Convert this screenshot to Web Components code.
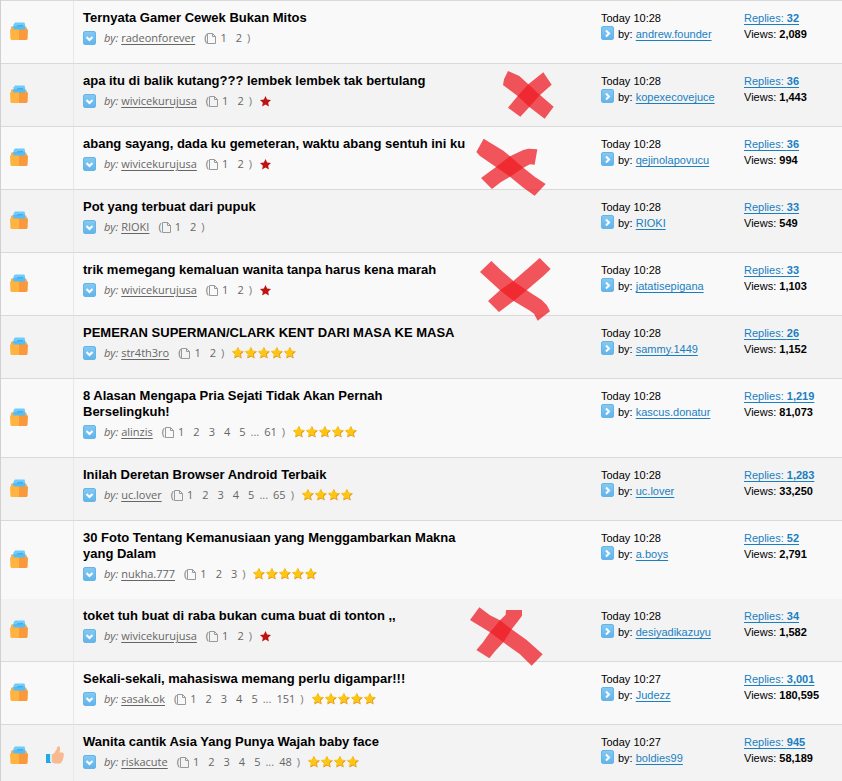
<!DOCTYPE html>
<html lang="id">
<head>
<meta charset="utf-8">
<meta name="viewport" content="width=device-width, initial-scale=1">
<title>Forum</title>
<style>
  body {
    margin: 0;
    background: #f9f9f9;
    color: #000;
    font-family: "Liberation Sans", Arial, sans-serif;
    font-size: 11px;
    line-height: 16px;
  }
</style>
</head>
<body>
<thread-list></thread-list>

<script>
const threads = [
  { title: "Ternyata Gamer Cewek Bukan Mitos", author: "radeonforever", pages: ["1", "2"], time: "Today 10:28", last: "andrew.founder", replies: "32", views: "2,089" },
  { title: "apa itu di balik kutang??? lembek lembek tak bertulang", author: "wivicekurujusa", pages: ["1", "2"], red: true, mark: "a", time: "Today 10:28", last: "kopexecovejuce", replies: "36", views: "1,443" },
  { title: "abang sayang, dada ku gemeteran, waktu abang sentuh ini ku", author: "wivicekurujusa", pages: ["1", "2"], red: true, mark: "b", time: "Today 10:28", last: "qejinolapovucu", replies: "36", views: "994" },
  { title: "Pot yang terbuat dari pupuk", author: "RIOKI", pages: ["1", "2"], time: "Today 10:28", last: "RIOKI", replies: "33", views: "549" },
  { title: "trik memegang kemaluan wanita tanpa harus kena marah", author: "wivicekurujusa", pages: ["1", "2"], red: true, mark: "c", time: "Today 10:28", last: "jatatisepigana", replies: "33", views: "1,103" },
  { title: "PEMERAN SUPERMAN/CLARK KENT DARI MASA KE MASA", author: "str4th3ro", pages: ["1", "2"], stars: 5, time: "Today 10:28", last: "sammy.1449", replies: "26", views: "1,152" },
  { title: "8 Alasan Mengapa Pria Sejati Tidak Akan Pernah Berselingkuh!", author: "alinzis", pages: ["1", "2", "3", "4", "5"], lastPage: "61", stars: 5, time: "Today 10:28", last: "kascus.donatur", replies: "1,219", views: "81,073" },
  { title: "Inilah Deretan Browser Android Terbaik", author: "uc.lover", pages: ["1", "2", "3", "4", "5"], lastPage: "65", stars: 4, time: "Today 10:28", last: "uc.lover", replies: "1,283", views: "33,250" },
  { title: "30 Foto Tentang Kemanusiaan yang Menggambarkan Makna yang Dalam", author: "nukha.777", pages: ["1", "2", "3"], stars: 5, time: "Today 10:28", last: "a.boys", replies: "52", views: "2,791" },
  { title: "toket tuh buat di raba bukan cuma buat di tonton ,,", author: "wivicekurujusa", pages: ["1", "2"], red: true, mark: "d", joined: true, time: "Today 10:28", last: "desiyadikazuyu", replies: "34", views: "1,582" },
  { title: "Sekali-sekali, mahasiswa memang perlu digampar!!!", author: "sasak.ok", pages: ["1", "2", "3", "4", "5"], lastPage: "151", stars: 5, time: "Today 10:27", last: "Judezz", replies: "3,001", views: "180,595" },
  { title: "Wanita cantik Asia Yang Punya Wajah baby face", author: "riskacute", pages: ["1", "2", "3", "4", "5"], lastPage: "48", stars: 4, liked: true, time: "Today 10:27", last: "boldies99", replies: "945", views: "58,189" },
];

const icons = {
  folder: `<svg width="18" height="18" viewBox="0 0 18 18">
      <path d="M1 5l2-1h12l2 2v4H1z" fill="#f8ae4a"/>
      <path d="M5 .5h9.500l.5 2 .8 6H3.500V2.500z" fill="#6fcbf9"/>
      <path d="M3.500 4h11.500v4H3.500z" fill="#52bdf8"/>
      <path d="M7 3.500l6-.5v1l-6 .5z" fill="#3ba4e6"/>
      <path d="M0 7.500h9V18H2q-1.500 0-1.600-1.500z" fill="#ffb340"/>
      <path d="M9 7.500h9l-.4 9Q17.500 18 16 18H9z" fill="#fa993b"/>
    </svg>`,
  thumb: `<svg width="18" height="18" viewBox="0 0 18 18">
      <path d="M0 8h5v9H0z" fill="#25a9e0"/>
      <path d="M4 8h2v8H4z" fill="#cfeefa"/>
      <path d="M6 8.500q3-1.500 4.500-5L11.300.8q1.700-1.300 2.700.7.5 2-.7 5h3.200q1.700.7 1.300 2.500 0 2-.7 3-.2 2-.9 3-.8 2.500-3 2.500H9l-3-1z" fill="#f8b990"/>
    </svg>`,
};

class ForumIcon extends HTMLElement {
  connectedCallback() {
    this.attachShadow({ mode: "open" });
    this.shadowRoot.innerHTML = `
      <style>
        :host { display: inline-block; width: 18px; height: 18px; }
        svg { display: block; }
      </style>
      ${icons[this.getAttribute("name")]}
    `;
  }
}
customElements.define("forum-icon", ForumIcon);

// small blue square button with a chevron, pointing down or right
class ChevronButton extends HTMLElement {
  connectedCallback() {
    const down = this.getAttribute("direction") === "down";
    this.attachShadow({ mode: "open" });
    this.shadowRoot.innerHTML = `
      <style>
        :host { display: block; }
        button {
          display: flex;
          align-items: center;
          justify-content: center;
          width: 13px;
          height: 14px;
          padding: 0;
          border: 1px solid #66b5e9;
          border-radius: 2px;
          background: linear-gradient(#83c9f2, #62b4ec);
          cursor: pointer;
        }
        svg { display: block; }
      </style>
      <button type="button" aria-label="${down ? "Preview" : "Go to last post"}">
        <svg width="11" height="11" viewBox="0 0 11 11" fill="none" stroke="#fff" stroke-width="2">
          <path d="${down ? "M2.5 4l3 3 3-3" : "M4 2.5l3 3-3 3"}"/>
        </svg>
      </button>
    `;
  }
}
customElements.define("chevron-button", ChevronButton);

class StarRating extends HTMLElement {
  connectedCallback() {
    const red = this.hasAttribute("red");
    const count = Number(this.getAttribute("count"));
    const size = red ? 11 : 12;
    const shape = "M6 0l1.8 3.9 4.2.5-3.1 2.9.8 4.2L6 9.4l-3.7 2.1.8-4.2L0 4.4l4.2-.5z";
    const star = `
      <svg width="${size}" height="${size}" viewBox="0 0 12 12">
        ${red ? `<path d="${shape}" fill="#be1313"/>` : `<path d="${shape}" fill="#e08a1c"/><path d="${shape}" transform="scale(.92)" fill="#fdc613"/>`}
      </svg>`;
    this.attachShadow({ mode: "open" });
    this.shadowRoot.innerHTML = `
      <style>
        :host { display: flex; gap: 1px; }
        svg { display: block; }
      </style>
      ${star.repeat(count)}
    `;
  }
}
customElements.define("star-rating", StarRating);

class PageLinks extends HTMLElement {
  setPages(pages, lastPage) {
    this.attachShadow({ mode: "open" });
    this.shadowRoot.innerHTML = `
      <style>
        :host { display: flex; align-items: center; color: #777; }
        svg { display: block; margin-right: 4px; }
        .pages { display: flex; gap: 9px; margin-right: 5px; }
        .last { display: flex; gap: 5px; margin-right: 5px; }
        a { color: #666; text-decoration: none; }
      </style>
      <span>(</span>
      <svg width="9" height="11" viewBox="0 0 9 11" fill="none" stroke="#999">
        <path d="M.5.5h5l3 3v7h-8zM5.5.5v3h3"/>
      </svg>
      <span class="pages">${pages.map((page) => `<a href="#">${page}</a>`).join("")}</span>
      ${lastPage ? `<span class="last"><span>...</span><a href="#">${lastPage}</a></span>` : ""}
      <span>)</span>
    `;
  }
}
customElements.define("page-links", PageLinks);

// hand-painted red cross laid over a thread
class CrossMark extends HTMLElement {
  connectedCallback() {
    const marks = {
      a: {
        origin: "-60 0",
        strokes: [
          "84,33 118,48 145,73 180,105 221,140 194,176 148,141 113,108 69,75 72,58",
          "190,37 215,74 180,105 148,141 121,170 84,143 113,108 145,73",
        ],
      },
      b: {
        origin: "0 9",
        strokes: [
          "71,56 130,92 150,109 190,143 225,171 257,192 224,227 190,203 150,170 108,141 60,108 49,96",
          "232,88 224,134 210,133 190,143 150,170 122,187 96,207 63,174 108,141 150,109 190,90 205,86",
        ],
      },
      c: {
        origin: "-30 -3",
        strokes: [
          "64,33 98,65 130,93 170,121 215,150 230,165 240,184 203,212 192,191 180,182 131,153 90,121 30,66",
          "209,24 242,57 220,78 170,121 131,153 87,186 54,153 90,121 130,93 175,54",
        ],
      },
      d: {
        origin: "0 0",
        strokes: [
          "58,37 90,61 120,76 155,103 200,135 248,178 215,212 180,178 130,142 90,112 30,75",
          "138,45 186,45 186,62 175,77 155,103 130,142 105,169 88,190 49,165 68,143 90,112 120,76 137,59",
        ],
      },
    };
    const mark = marks[this.getAttribute("shape")];
    this.attachShadow({ mode: "open" });
    this.shadowRoot.innerHTML = `
      <style>
        :host {
          position: absolute;
          top: -13px;
          left: 377px;
          z-index: 1;
          pointer-events: none;
        }
        svg { display: block; }
      </style>
      <svg width="120" height="84" viewBox="${mark.origin} 360 252" fill="#ed1c24" fill-opacity=".75">
        ${mark.strokes.map((points) => `<polygon points="${points}"/>`).join("")}
      </svg>
    `;
  }
}
customElements.define("cross-mark", CrossMark);

class ThreadInfo extends HTMLElement {
  setThread(thread) {
    this.attachShadow({ mode: "open" });
    this.shadowRoot.innerHTML = `
      <style>
        :host { display: block; position: relative; }
        .title {
          display: block;
          max-width: 388px;
          color: #000;
          font-size: 13px;
          font-weight: bold;
          text-decoration: none;
        }
        .meta {
          display: flex;
          align-items: center;
          height: 16px;
          margin-top: 4px;
          color: #666;
          font-family: "Open Sans", sans-serif;
          font-size: 11px;
        }
        .author { margin: 0 9px 0 3px; color: #666; text-underline-offset: 2px; }
        chevron-button { margin-right: 8px; }
        star-rating { margin-left: 8px; }
      </style>
      <a class="title" href="#">${thread.title}</a>
      <div class="meta">
        <chevron-button direction="down"></chevron-button>
        <em>by:</em>
        <a class="author" href="#">${thread.author}</a>
        <page-links></page-links>
        ${thread.red ? `<star-rating red count="1"></star-rating>` : ""}
        ${thread.stars ? `<star-rating count="${thread.stars}"></star-rating>` : ""}
      </div>
      ${thread.mark ? `<cross-mark shape="${thread.mark}"></cross-mark>` : ""}
    `;
    this.shadowRoot.querySelector("page-links").setPages(thread.pages, thread.lastPage);
  }
}
customElements.define("thread-info", ThreadInfo);

class LastPost extends HTMLElement {
  connectedCallback() {
    this.attachShadow({ mode: "open" });
    this.shadowRoot.innerHTML = `
      <style>
        :host { display: block; }
        .by { display: flex; gap: 4px; }
        ::slotted(a) { color: #1a7fc1; text-underline-offset: 2px; }
      </style>
      <div>${this.getAttribute("time")}</div>
      <div class="by">
        <chevron-button direction="right"></chevron-button>
        <span>by: <slot></slot></span>
      </div>
    `;
  }
}
customElements.define("last-post", LastPost);

class ThreadStats extends HTMLElement {
  connectedCallback() {
    this.attachShadow({ mode: "open" });
    this.shadowRoot.innerHTML = `
      <style>
        :host { display: block; }
        a { color: #1a7fc1; text-underline-offset: 2px; }
      </style>
      <a href="#">Replies: <b>${this.getAttribute("replies")}</b></a>
      <div>Views: <b>${this.getAttribute("views")}</b></div>
    `;
  }
}
customElements.define("thread-stats", ThreadStats);

class ThreadList extends HTMLElement {
  connectedCallback() {
    this.attachShadow({ mode: "open" });
    this.render();
  }

  render() {
    this.shadowRoot.innerHTML = `
      <style>
        :host { display: block; border-left: 1px solid #d0d0d0; }
        table { width: 100%; border-spacing: 0; table-layout: fixed; }
        td {
          padding: 9px 0 8px;
          border-top: 1px solid #d9d9d9;
          vertical-align: top;
        }
        tr:nth-child(even) { background: #f3f3f3; }
        .joined td { border-top: 0; }
        .status-col { width: 72px; }
        .last-col { width: 143px; }
        .stats-col { width: 98px; }
        .status { vertical-align: middle; padding: 0 9px 2px; }
        .icons { display: flex; gap: 18px; }
        .info { padding-left: 9px; padding-bottom: 17px; border-left: 1px solid #e8e8e8; }
      </style>
      <table>
        <colgroup>
          <col class="status-col"><col><col class="last-col"><col class="stats-col">
        </colgroup>
        <tbody>
          ${threads.map((thread) => this.row(thread)).join("")}
        </tbody>
      </table>
    `;
    this.shadowRoot.querySelectorAll("thread-info").forEach((info, i) => info.setThread(threads[i]));
  }

  row(thread) {
    return `
      <tr class="${thread.joined ? "joined" : ""}">
        <td class="status">
          <div class="icons">
            <forum-icon name="folder"></forum-icon>
            ${thread.liked ? `<forum-icon name="thumb"></forum-icon>` : ""}
          </div>
        </td>
        <td class="info"><thread-info></thread-info></td>
        <td><last-post time="${thread.time}"><a href="#">${thread.last}</a></last-post></td>
        <td><thread-stats replies="${thread.replies}" views="${thread.views}"></thread-stats></td>
      </tr>`;
  }
}
customElements.define("thread-list", ThreadList);
</script>
</body>
</html>
